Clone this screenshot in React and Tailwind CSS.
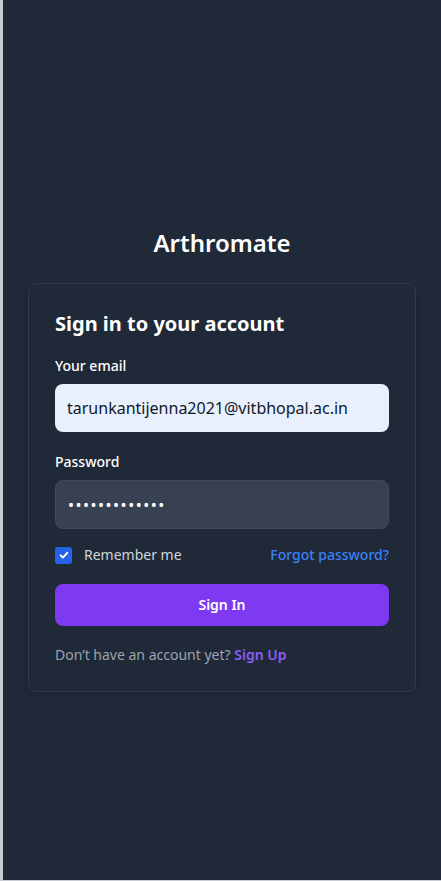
import React, { useState } from 'react';

const App = () => {
    const [email, setEmail] = useState('tarunkantijenna2021@vitbhopal.ac.in');
    const [password, setPassword] = useState('tarun@1234567');
    const [remember, setRemember] = useState(true);

    return (
        <div
            className="min-h-screen bg-[#1f2937] border-l-[3px] border-b border-[#c9cdd3] flex flex-col items-center pt-[227px]"
            style={{ fontFamily: '"Noto Sans", "Open Sans", sans-serif' }}
        >
            <h1 className="text-2xl leading-8 font-semibold text-white mb-6">Arthromate</h1>

            <div className="w-[388px] bg-[#1f2937] border border-[#2f3b4c] rounded-lg shadow-md p-[26px]">
                <h2 className="text-xl leading-7 font-bold text-white">Sign in to your account</h2>

                <form className="mt-[18px]" onSubmit={(e) => e.preventDefault()}>
                    <label className="block text-sm leading-5 font-medium text-white mb-2">Your email</label>
                    <input
                        type="email"
                        value={email}
                        onChange={(e) => setEmail(e.target.value)}
                        className="w-full h-12 rounded-lg bg-[#e8f0fe] text-[#111827] text-base px-3 focus:outline-none"
                    />

                    <label className="block text-sm leading-5 font-medium text-white mt-5 mb-2">Password</label>
                    <input
                        type="password"
                        value={password}
                        onChange={(e) => setPassword(e.target.value)}
                        className="w-full h-[49px] rounded-lg bg-[#374151] border border-[#3f4b5b] text-white text-base px-3 tracking-[1.5px] focus:outline-none"
                    />

                    <div className="flex items-center justify-between mt-4">
                        <label className="flex items-center gap-3 text-sm text-[#d1d5db]">
                            <span
                                onClick={() => setRemember(!remember)}
                                className={`w-[17px] h-[17px] rounded-[3px] flex items-center justify-center ${remember ? 'bg-[#2563eb]' : 'bg-[#374151] border border-[#4b5563]'}`}
                            >
                                {remember && (
                                    <svg viewBox="0 0 16 16" className="w-3 h-3" fill="none" stroke="white" strokeWidth="2.5" strokeLinecap="round" strokeLinejoin="round">
                                        <path d="M3.5 8.5l3 3 6-6.5" />
                                    </svg>
                                )}
                            </span>
                            Remember me
                        </label>
                        <a href="#" className="text-sm font-medium text-[#3b82f6]">Forgot password?</a>
                    </div>

                    <button
                        type="submit"
                        className="w-full h-[42px] mt-[19px] rounded-lg bg-[#7e3af2] text-white text-sm font-semibold"
                    >
                        Sign In
                    </button>

                    <p className="text-sm leading-5 text-[#9ca3af] mt-[19px]">
                        Don’t have an account yet? <a href="#" className="font-semibold text-[#8b5cf6]">Sign Up</a>
                    </p>
                </form>
            </div>
        </div>
    );
};

export default App;
